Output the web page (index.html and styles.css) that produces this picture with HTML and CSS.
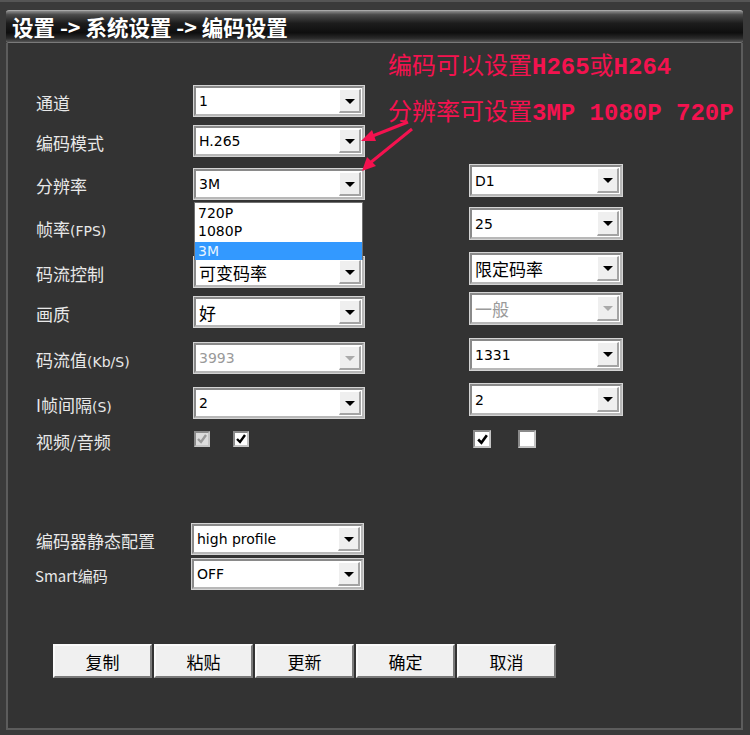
FILE: index.html
```html
<!DOCTYPE html>
<html lang="zh">
<head>
<meta charset="utf-8">
<title>编码设置</title>
<link rel="stylesheet" href="styles.css">
</head>
<body>
<div class="window">
  <div class="titlebar">设置 -&gt; 系统设置 -&gt; 编码设置</div>
  <div class="main">
    <div class="form">
      <div class="lbl">通道</div>
      <div class="sel"><span class="v">1</span><span class="btn"></span></div>
      <div></div><div></div>

      <div class="lbl">编码模式</div>
      <div class="sel"><span class="v">H.265</span><span class="btn"></span></div>
      <div></div><div></div>

      <div class="lbl">分辨率</div>
      <div class="sel"><span class="v">3M</span><span class="btn"></span></div>
      <div></div>
      <div class="sel r"><span class="v">D1</span><span class="btn"></span></div>

      <div class="lbl">帧率<span class="lat">(FPS)</span></div>
      <div></div>
      <div></div>
      <div class="sel r"><span class="v">25</span><span class="btn"></span></div>

      <div class="lbl">码流控制</div>
      <div class="sel"><span class="v cjk">可变码率</span><span class="btn"></span></div>
      <div></div>
      <div class="sel r"><span class="v cjk">限定码率</span><span class="btn"></span></div>

      <div class="lbl">画质</div>
      <div class="sel"><span class="v cjk">好</span><span class="btn"></span></div>
      <div></div>
      <div class="sel r dis"><span class="v cjk">一般</span><span class="btn"></span></div>

      <div class="lbl">码流值<span class="lat">(Kb/S)</span></div>
      <div class="sel dis"><span class="v">3993</span><span class="btn"></span></div>
      <div></div>
      <div class="sel r"><span class="v">1331</span><span class="btn"></span></div>

      <div class="lbl">I帧间隔<span class="lat">(S)</span></div>
      <div class="sel"><span class="v">2</span><span class="btn"></span></div>
      <div></div>
      <div class="sel r"><span class="v">2</span><span class="btn"></span></div>

      <div class="lbl last">视频/音频</div>
      <div class="checks">
        <span class="cb dis"><svg viewBox="0 0 12 12" width="12" height="12"><path d="M2 6 L5 9 L10 2" fill="none" stroke="#9a9a9a" stroke-width="2.4"/></svg></span>
        <span class="cb"><svg viewBox="0 0 12 12" width="12" height="12"><path d="M2 6 L5 9 L10 2" fill="none" stroke="#000" stroke-width="2.4"/></svg></span>
      </div>
      <div></div>
      <div class="checks r rchecks">
        <span class="cb big"><svg viewBox="0 0 12 12" width="13" height="13"><path d="M2 6 L5 9 L10 2" fill="none" stroke="#000" stroke-width="2.4"/></svg></span>
        <span class="cb big"></span>
      </div>
    </div>

    <div class="form2">
      <div class="lbl">编码器静态配置</div>
      <div class="sel"><span class="v">high profile</span><span class="btn"></span></div>
      <div class="lbl small">Smart编码</div>
      <div class="sel"><span class="v">OFF</span><span class="btn"></span></div>
    </div>

    <div class="buttons">
      <button class="b">复制</button>
      <button class="b">粘贴</button>
      <button class="b">更新</button>
      <button class="b">确定</button>
      <button class="b">取消</button>
    </div>
  </div>

  <div class="dropdown">
    <div class="item">720P</div>
    <div class="item">1080P</div>
    <div class="item on">3M</div>
  </div>

  <div class="note n1">编码可以设置<span class="m">H265</span>或<span class="m">H264</span></div>
  <div class="note n2">分辨率可设置<span class="m">3MP 1080P 720P</span></div>

  <svg class="arrows" width="750" height="735" viewBox="0 0 750 735">
    <line x1="408" y1="120" x2="370" y2="135" stroke="#f4124f" stroke-width="3"/>
    <polygon points="361,139 372,128 376,139" fill="#f4124f"/>
    <line x1="412" y1="127" x2="370" y2="161" stroke="#f4124f" stroke-width="3"/>
    <polygon points="362,169 367,155 376,164" fill="#f4124f"/>
  </svg>
</div>
</body>
</html>
```

FILE: styles.css
```css
html, body {
  margin: 0;
  padding: 0;
  background: #2e2e2e;
}

.window {
  position: relative;
  width: 750px;
  height: 735px;
  box-sizing: border-box;
  padding: 8px 7px 5px 6px;
  background: #3a3a3a;
  border-top: 2px solid #555;
  display: flex;
  flex-direction: column;
  overflow: hidden;
}

.titlebar {
  height: 31px;
  border-top: 1px solid #a8a8a8;
  border-bottom: 1px solid #7a7a7a;
  border-radius: 3px;
  background: linear-gradient(#8a8a8a 0%, #4a4a4a 12%, #1c1c1c 40%, #0e0e0e 70%, #2a2a2a 88%, #555 100%);
  color: #fff;
  font-family: "Noto Sans CJK SC", sans-serif;
  font-weight: bold;
  font-size: 21.5px;
  line-height: 31px;
  padding-left: 6px;
  white-space: nowrap;
}

.main {
  flex: 1;
  background: #333333;
  border-left: 2px solid #5c5c5c;
  border-right: 2px solid #5c5c5c;
  border-bottom: 2px solid #5c5c5c;
  padding-left: 28px;
  padding-top: 43px;
}

.lbl {
  color: #e8e8e8;
  font-family: "Noto Sans CJK SC", sans-serif;
  font-size: 17px;
  height: 30px;
  line-height: 30px;
  margin-top: 2px;
  white-space: nowrap;
}
.lbl .lat {
  font-family: "DejaVu Sans", sans-serif;
  font-size: 14px;
}
.lbl.small {
  font-size: 15px;
  margin-left: -1px;
}
.lbl.last {
  margin-top: -4px;
}

.form {
  display: grid;
  grid-template-columns: 158px 170px 106px 152px;
  grid-template-rows: 40px 43px 43px 45px 40px 46px 45px 43px 20px;
  align-items: start;
}

.form2 {
  display: grid;
  grid-template-columns: 156px 171px;
  grid-template-rows: 35px 35px;
  align-items: start;
  margin-top: 73px;
}

.sel {
  height: 30px;
  box-sizing: border-box;
  background: #fff;
  border: 2px solid #8a8a8a;
  border-right-color: #b8b8b8;
  border-bottom-color: #b8b8b8;
  box-shadow: 0 0 0 1px #d4d4d4;
  display: flex;
  align-items: center;
  padding: 1px;
}
.sel.r {
  margin-top: -4px;
  height: 31px;
}
.sel .v {
  flex: 1;
  padding-left: 2px;
  font-family: "DejaVu Sans", sans-serif;
  font-size: 14px;
  color: #000;
  white-space: nowrap;
}
.sel .v.cjk {
  font-family: "Noto Sans CJK SC", sans-serif;
  font-size: 17px;
}
.sel .btn {
  position: relative;
  width: 22px;
  height: 100%;
  box-sizing: border-box;
  background: #efefef;
  border-top: 1px solid #fff;
  border-left: 1px solid #fff;
  border-right: 2px solid #a4a4a4;
  border-bottom: 2px solid #a4a4a4;
}
.sel .btn::after {
  content: "";
  position: absolute;
  left: 50%;
  top: 50%;
  margin-left: -5px;
  margin-top: -2px;
  border-left: 5px solid transparent;
  border-right: 5px solid transparent;
  border-top: 5px solid #000;
}
.sel.dis .v {
  color: #9a9a9a;
}
.sel.dis .btn::after {
  border-top-color: #aaa;
}

.checks {
  display: flex;
  gap: 23px;
}
.rchecks {
  gap: 27px;
  margin-top: -1px;
  padding-left: 3px;
}
.cb {
  width: 16px;
  height: 16px;
  box-sizing: border-box;
  background: #fff;
  border: 2px solid #8a8a8a;
  border-right-color: #c4c4c4;
  border-bottom-color: #c4c4c4;
  display: flex;
  align-items: center;
  justify-content: center;
}
.cb.big {
  width: 18px;
  height: 18px;
}
.cb.dis {
  background: #dcdcdc;
}

.buttons {
  display: flex;
  gap: 2px;
  margin-top: 50px;
  margin-left: 17px;
}
.b {
  width: 99px;
  height: 34px;
  box-sizing: border-box;
  margin: 0;
  padding: 0;
  background: #f0f0f0;
  border: 2px solid #7a7a7a;
  border-top-color: #fafafa;
  border-left-color: #fafafa;
  font-family: "Noto Sans CJK SC", sans-serif;
  font-size: 17px;
  color: #000;
}

.dropdown {
  position: absolute;
  left: 194px;
  top: 200px;
  width: 169px;
  height: 58px;
  box-sizing: border-box;
  background: #fff;
  border: 1px solid #707070;
  padding-top: 1px;
}
.dropdown .item {
  height: 18px;
  line-height: 18px;
  padding-left: 3px;
  font-family: "DejaVu Sans", sans-serif;
  font-size: 14px;
  color: #000;
}
.dropdown .item.on {
  margin-top: 2px;
  background: #3399ff;
  color: #e8f4ff;
}

.note {
  position: absolute;
  left: 388px;
  color: #f4124f;
  font-family: "Noto Sans CJK SC", sans-serif;
  font-size: 24px;
  line-height: 28px;
  white-space: nowrap;
}
.note .m {
  font-family: "Liberation Mono", monospace;
  font-weight: bold;
}
.n1 { top: 48px; }
.n2 { top: 94px; }

.arrows {
  position: absolute;
  left: 0;
  top: 0;
  pointer-events: none;
}
```
